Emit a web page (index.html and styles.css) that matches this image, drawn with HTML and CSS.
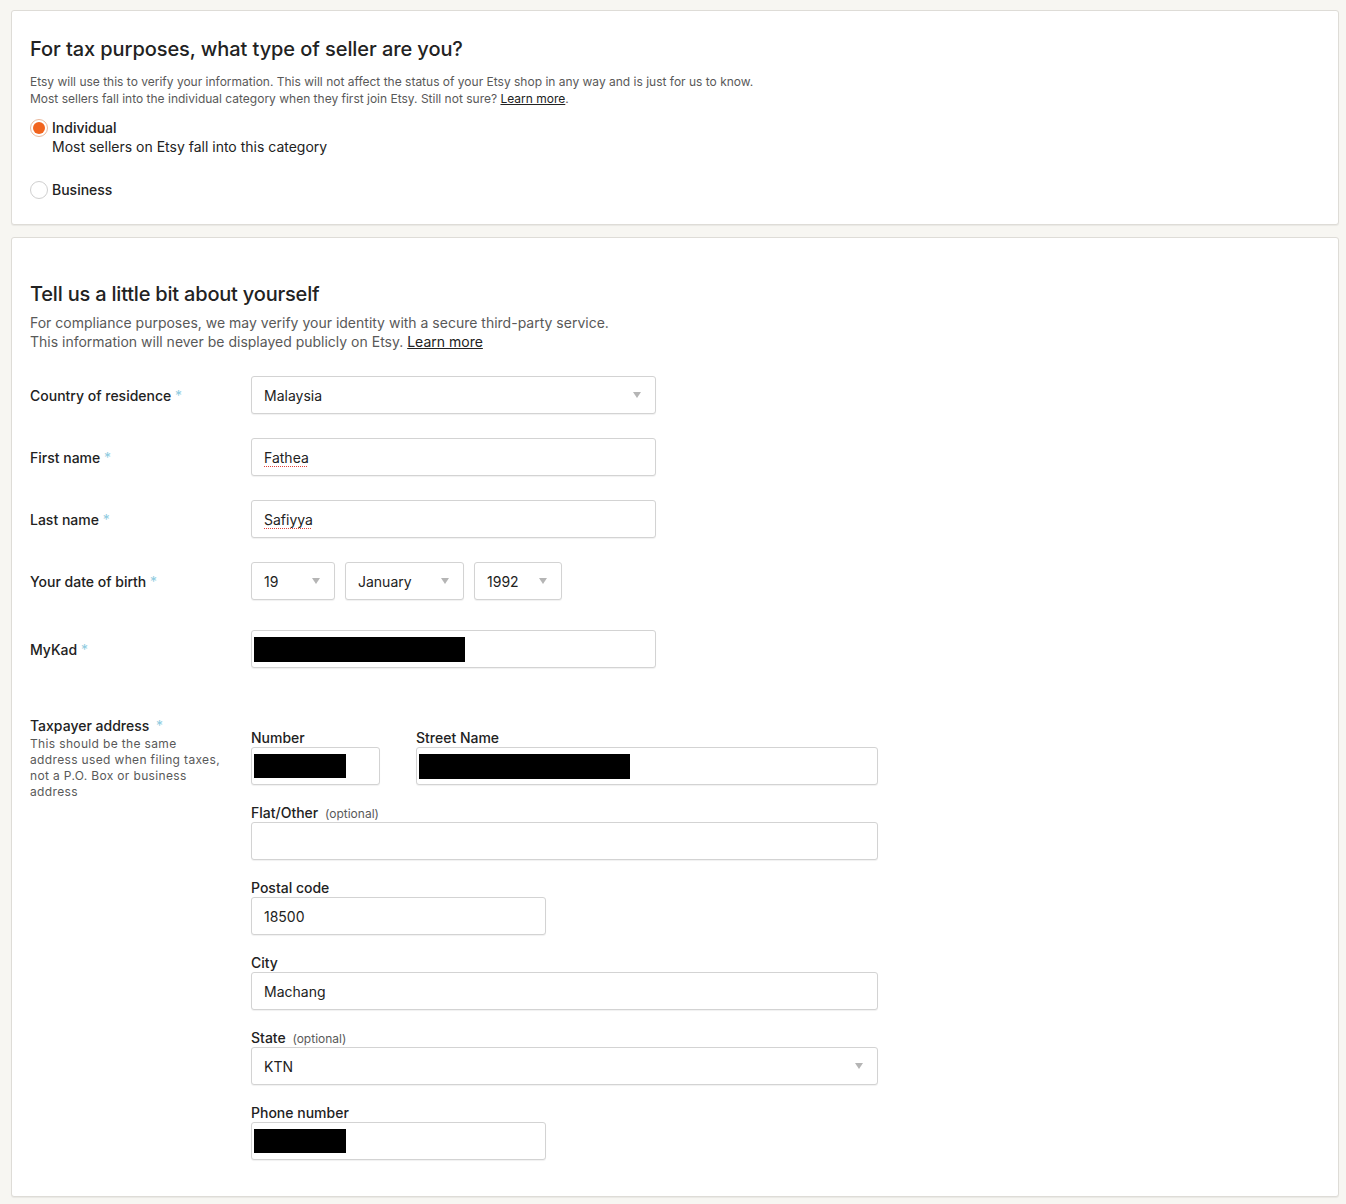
FILE: index.html
```html
<!DOCTYPE html>
<html lang="en">
<head>
<meta charset="utf-8">
<title>Seller information</title>
<link rel="stylesheet" href="styles.css">
</head>
<body>
<div class="page">
  <section class="card card-type">
    <h2 class="title">For tax purposes, what type of seller are you?</h2>
    <p class="small-desc">Etsy will use this to verify your information. This will not affect the status of your Etsy shop in any way and is just for us to know.<br>Most sellers fall into the individual category when they first join Etsy. Still not sure? <a href="#" class="link">Learn more</a>.</p>
    <div class="radio-group">
      <div class="radio-item">
        <span class="radio checked"><span class="dot"></span></span>
        <div class="radio-text">
          <div class="radio-label">Individual</div>
          <div class="radio-sub">Most sellers on Etsy fall into this category</div>
        </div>
      </div>
      <div class="radio-item">
        <span class="radio"></span>
        <div class="radio-text">
          <div class="radio-label">Business</div>
        </div>
      </div>
    </div>
  </section>

  <section class="card card-about">
    <h2 class="title title-about">Tell us a little bit about yourself</h2>
    <p class="desc">For compliance purposes, we may verify your identity with a secure third-party service.<br>This information will never be displayed publicly on Etsy. <a href="#" class="link">Learn more</a></p>

    <div class="form-row row-first">
      <div class="row-label">Country of residence <span class="req">*</span></div>
      <div class="field select w-main"><span class="val">Malaysia</span><span class="caret"></span></div>
    </div>
    <div class="form-row">
      <div class="row-label">First name <span class="req">*</span></div>
      <div class="field w-main"><span class="val spell">Fathea</span></div>
    </div>
    <div class="form-row">
      <div class="row-label">Last name <span class="req">*</span></div>
      <div class="field w-main"><span class="val spell">Safiyya</span></div>
    </div>
    <div class="form-row">
      <div class="row-label">Your date of birth <span class="req">*</span></div>
      <div class="dob">
        <div class="field select w-day"><span class="val">19</span><span class="caret"></span></div>
        <div class="field select w-month"><span class="val">January</span><span class="caret"></span></div>
        <div class="field select w-year"><span class="val">1992</span><span class="caret"></span></div>
      </div>
    </div>
    <div class="form-row row-mykad">
      <div class="row-label">MyKad <span class="req">*</span></div>
      <div class="field w-main redact-field"><span class="redact r-mykad"></span></div>
    </div>

    <div class="address">
      <div class="address-label">
        <div class="row-label">Taxpayer address <span class="req req-gap">*</span></div>
        <p class="address-help">This should be the same<br>address used when filing taxes,<br>not a P.O. Box or business<br>address</p>
      </div>
      <div class="address-fields">
        <div class="pair">
          <div class="group g-number">
            <div class="f-label">Number</div>
            <div class="field redact-field"><span class="redact r-number"></span></div>
          </div>
          <div class="group g-street">
            <div class="f-label">Street Name</div>
            <div class="field redact-field"><span class="redact r-street"></span></div>
          </div>
        </div>
        <div class="group">
          <div class="f-label">Flat/Other <span class="opt">(optional)</span></div>
          <div class="field"></div>
        </div>
        <div class="group g-half">
          <div class="f-label">Postal code</div>
          <div class="field"><span class="val">18500</span></div>
        </div>
        <div class="group">
          <div class="f-label">City</div>
          <div class="field"><span class="val">Machang</span></div>
        </div>
        <div class="group">
          <div class="f-label">State <span class="opt">(optional)</span></div>
          <div class="field select"><span class="val">KTN</span><span class="caret"></span></div>
        </div>
        <div class="group g-half">
          <div class="f-label">Phone number</div>
          <div class="field redact-field"><span class="redact r-phone"></span></div>
        </div>
      </div>
    </div>
  </section>
</div>
</body>
</html>
```

FILE: styles.css
```css
* { box-sizing: border-box; }
html, body { margin: 0; padding: 0; }
body {
  background: #f7f6f2;
  font-family: Inter, "Noto Sans", "Liberation Sans", sans-serif;
  color: #222;
  width: 1346px;
  height: 1204px;
  overflow: hidden;
}
.page {
  padding: 10px 7px 0 11px;
  display: flex;
  flex-direction: column;
  gap: 12px;
}
.card {
  background: #fff;
  border: 1px solid #dedcd7;
  border-radius: 3px;
  box-shadow: 0 1px 1px rgba(0,0,0,0.06);
  width: 1328px;
}
.card-type {
  padding: 26px 18px 24px;
  height: 215px;
}
.title {
  margin: 0;
  font-size: 20px;
  line-height: 24px;
  font-weight: 500;
  color: #222;
  letter-spacing: -0.08px;
}
.small-desc {
  margin: 12px 0 0;
  font-size: 12px;
  line-height: 17px;
  color: #595959;
}
.link { color: #222; text-decoration: underline; }
.radio-group { margin-top: 11px; display: flex; flex-direction: column; gap: 24px; }
.radio-item { display: flex; align-items: flex-start; gap: 4px; }
.radio {
  width: 18px; height: 18px; border-radius: 50%;
  border: 1px solid #cfcfcf;
  background: #fff;
  display: flex; align-items: center; justify-content: center;
  margin-top: 0.5px;
  flex: none;
}
.radio.checked { border-color: #e9b89c; }
.radio .dot { width: 12px; height: 12px; border-radius: 50%; background: #f1641e; }
.radio-label { font-size: 14px; line-height: 19px; font-weight: 500; color: #222; }
.radio-sub { font-size: 14px; line-height: 19px; color: #222; }

.card-about {
  padding: 42px 18px 36px;
  height: 960px;
}
.title-about { font-size: 20px; line-height: 28px; letter-spacing: -0.2px; }
.desc {
  margin: 5px 0 0;
  font-size: 14px;
  line-height: 19px;
  color: #595959;
}
.form-row { display: flex; align-items: center; margin-top: 24px; }
.form-row.row-first { margin-top: 25px; }
.form-row.row-mykad { margin-top: 30px; }
.row-label {
  width: 221px;
  flex: none;
  font-size: 14px;
  line-height: 19px;
  font-weight: 500;
  color: #222;
}
.req { color: #8fcbe0; font-weight: 400; }
.req-gap { margin-left: 3px; }
.field {
  position: relative;
  height: 38px;
  border: 1px solid #d3d3d3;
  border-radius: 3px;
  background: #fff;
  box-shadow: 0 1px 1px rgba(0,0,0,0.06);
  display: flex;
  align-items: center;
  padding: 0 12px;
  font-size: 14px;
  color: #222;
}
.w-main { width: 405px; }
.dob { display: flex; gap: 10px; }
.w-day { width: 84px; }
.w-month { width: 119px; }
.w-year { width: 88px; }
.caret {
  position: absolute;
  right: 14px;
  top: 15px;
  width: 0; height: 0;
  border-left: 4.5px solid transparent;
  border-right: 4.5px solid transparent;
  border-top: 6px solid #b5b5b5;
}
.spell {
  text-decoration: underline dotted #e0403a;
  text-underline-offset: 3px;
  text-decoration-thickness: 1px;
}
.redact-field { padding: 0 2px; }
.redact { display: block; background: #000; height: 25px; }
.r-mykad { width: 211px; }
.r-number { width: 92px; height: 24px; }
.r-street { width: 211px; }
.r-phone { width: 92px; height: 24px; }

.address { display: flex; margin-top: 48px; }
.address-label { width: 221px; flex: none; }
.address-label .row-label { width: auto; }
.address-help {
  margin: 1px 0 0;
  font-size: 12px;
  line-height: 16px;
  letter-spacing: 0.35px;
  color: #595959;
  white-space: nowrap;
}
.address-fields {
  width: 627px;
  padding-top: 12px;
  display: flex;
  flex-direction: column;
  gap: 18px;
}
.pair { display: flex; gap: 36px; }
.g-number { width: 129px; }
.g-street { flex: 1; }
.g-half { width: 295px; }
.f-label { font-size: 14px; line-height: 19px; height: 19px; font-weight: 500; color: #222; }
.opt { font-size: 12px; line-height: 1; font-weight: 400; color: #595959; margin-left: 3px; }
```
